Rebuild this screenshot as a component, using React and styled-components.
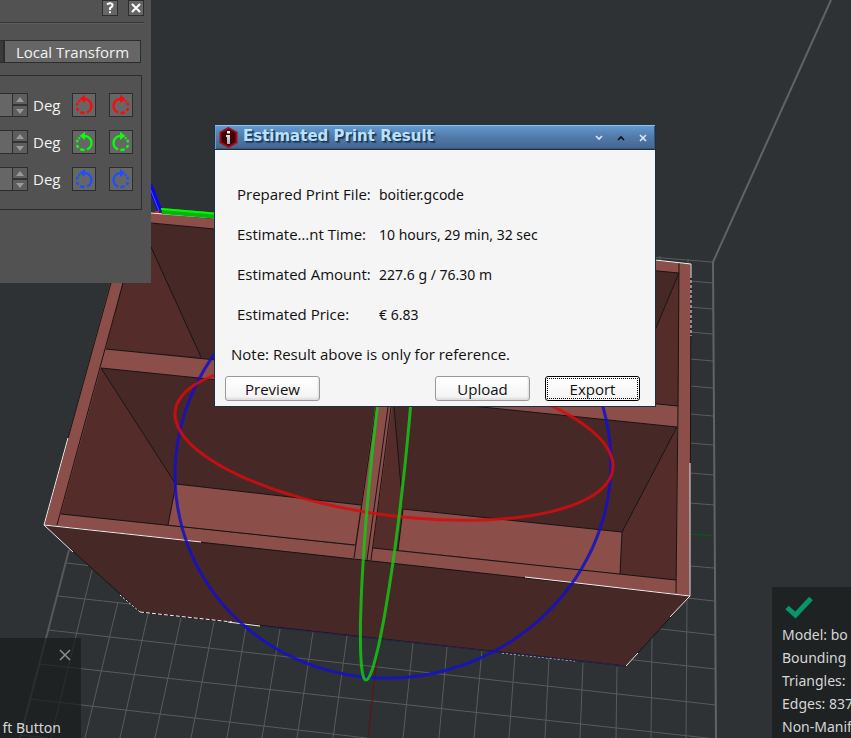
import React from "react";
import styled, { createGlobalStyle, css } from "styled-components";

const GlobalStyle = createGlobalStyle`
  * { box-sizing: border-box; }
  body { margin: 0; background: #2e3235; }
  body, button, input { font-family: "Noto Sans", "Open Sans", sans-serif; font-size: 14px; }
`;

const Viewport = styled.main`
  position: relative;
  height: 100vh;
  overflow: hidden;
  background: #2e3235;
`;

const SceneSvg = styled.svg`
  display: block;
  width: 100%;
  height: 100%;
`;

/* ---------- 3D scene ---------- */

/* Projected circle: centre c, with u and v as its two projected radii. */
const ring = ([cx, cy], [ux, uy], [vx, vy]) => {
  const steps = 120;
  const pts = Array.from({ length: steps }, (_, i) => {
    const t = (i / steps) * Math.PI * 2;
    const x = cx + ux * Math.cos(t) + vx * Math.sin(t);
    const y = cy + uy * Math.cos(t) + vy * Math.sin(t);
    return `${x.toFixed(1)} ${y.toFixed(1)}`;
  });
  return `M${pts.join("L")}Z`;
};

const gridColumns = [
  [92, 570, 51, 738], [118, 602, 85, 738], [148, 614, 120, 738], [181, 618, 155, 738],
  [214, 622, 191, 738], [246, 627, 227, 738], [280, 629, 262, 738], [313, 632, 297, 738],
  [347, 636, 333, 738], [413, 643, 403, 738], [447, 647, 439, 738], [482, 650, 474, 738],
  [515, 654, 509, 738], [549, 658, 545, 738], [583, 663, 580, 738], [617, 667, 616, 738],
  [652, 638, 651, 738], [687, 598, 686, 738],
];

const gridRows = [
  [66, 563, 715, 635], [58, 596, 715, 669], [48, 630, 716, 705], [39, 664, 716, 739],
  [30, 699, 367, 738], [20, 735, 48, 738], [687, 598, 714, 601], [690, 566, 714, 568],
  [690, 503, 714, 505], [690, 473, 714, 475], [690, 443, 713, 445], [690, 414, 713, 416],
  [690, 386, 713, 388], [690, 359, 713, 361], [690, 332, 713, 334], [690, 307, 713, 309],
  [690, 281, 713, 283], [650, 257, 712, 262], [660, 256, 660, 260], [688, 259, 688, 263],
];

const modelEdges = [
  "M111 283 44 525 M123 283 57 525 M61 514 355 545 M373 548 676 580",
  "M44 525 690 596 626 666 140 612Z",
  "M151 247 201 357 M151 223 679 273 M106 349 678 406 M101 368 677 427",
  "M101 368 175 483 M176 484 361 505 M176 484 168 525",
  "M376 407 354 558 M388 407 367 560 M391 407 371 560 M394 407 401 487",
  "M403 509 622 532 620 574 M403 509 398 550 M677 427 622 532",
  "M679 263 678 406 676 593 M679 273 640 366 M691 264 690 596",
].join(" ");

function Scene() {
  return (
    <SceneSvg viewBox="0 0 851 738" preserveAspectRatio="xMidYMid slice" aria-hidden="true">
      <g stroke="#595b5c" strokeWidth="1">
        {[...gridColumns, ...gridRows].map(([x1, y1, x2, y2]) => (
          <line key={`${x1}-${y1}-${x2}`} x1={x1} y1={y1} x2={x2} y2={y2} />
        ))}
      </g>
      <g stroke="#616263" fill="none">
        <path d="M831 0 713 262 716 738" strokeWidth="2" />
        <path d="M69 550 20 738" strokeWidth="2" strokeOpacity="0.8" />
      </g>
      <path d="M690 534 714 536" stroke="#0b5c0b" />
      <path d="M379 640 368 738" stroke="#6b0d0f" />

      <path d="M130 211 691 264 690 596 44 525Z" fill="#8b4e49" />
      <path d="M138 222 679 273 678 406 106 349Z" fill="#462827" />
      <path d="M138 222 106 349 201 357 140 222Z" fill="#542d2a" />
      <path d="M679 273 640 366 640 402 678 406Z" fill="#542d2a" />
      <path d="M101 368 677 427 676 580 61 514Z" fill="#462827" />
      <path d="M101 368 176 484 168 525 61 514Z" fill="#542d2a" />
      <path d="M677 427 622 532 620 574 676 580Z" fill="#542d2a" />
      <path d="M176 484 361 505 355 545 168 525Z" fill="#8b4e49" />
      <path d="M403 509 622 532 620 574 398 550Z" fill="#8b4e49" />
      <path d="M376 400 394 400 372 560 354 558Z" fill="#8b4e49" />
      <path d="M392 407 394 407 401 487 403 509 398 550 373 548Z" fill="#542d2a" />
      <path d="M44 525 690 596 626 666 140 612Z" fill="#462827" />
      <path d={modelEdges} stroke="#171515" fill="none" />

      <g stroke="#f4f0ef" fill="none">
        <path d="M68 438 44 525 201 542 M44 525 73 552 M525 577 690 596 670 617 M638 653 626 666" />
        <path d="M690 463V596 M151 213 215 218 M655 260 691 264V275" />
        <path d="M691 275V336" strokeDasharray="3 2" />
        <path d="M120 595 140 612" strokeDasharray="2 2" />
        <path d="M140 612 232 622" strokeDasharray="4 2" />
        <path d="M228 622 260 626" />
        <path d="M502 653 575 661" strokeDasharray="2 2" />
      </g>
      <path d="M260 626 626 666" stroke="#25244f" />

      <path d="M150 185 160 211" stroke="#0606f4" strokeWidth="5" />
      <path d="M150 188 159 211" stroke="#5756c8" strokeWidth="1" />
      <path d="M162 211 220 216" stroke="#05b50c" strokeWidth="6" />
      <path d="M161 209 220 214" stroke="#05f505" strokeWidth="2" />
      <path d="M155 212H159" stroke="#e32020" strokeWidth="2" />

      <g fill="none" strokeWidth="3">
        <path d={ring([393, 469], [218, -6], [0, 209])} stroke="#1410c8" strokeOpacity="0.86" />
        <path d={ring([394, 440], [219, 26], [0, 76])} stroke="#d80c10" strokeOpacity="0.84" />
        <path d={ring([389, 455], [17, 0], [-23, 225])} stroke="#14c814" strokeOpacity="0.84" />
      </g>
    </SceneSvg>
  );
}

/* ---------- rotate panel ---------- */

const ToolPanel = styled.section`
  position: absolute;
  top: 0;
  left: 0;
  width: 151px;
  height: 283px;
  padding-right: 9px;
  overflow: hidden;
  display: flex;
  flex-direction: column;
  align-items: flex-end;
  background: #525252;
  color: #f2f2f2;
`;

const PanelHeader = styled.header`
  flex: none;
  width: 240px;
  height: 24px;
  margin-right: -2px;
  display: flex;
  justify-content: flex-end;
  align-items: flex-start;
  gap: 10px;
  border-bottom: 1px solid #5f5f5f;
  box-shadow: inset 0 -1px #363636;
`;

const DarkButton = styled.button`
  flex: none;
  display: grid;
  place-items: center;
  width: ${(p) => p.$size}px;
  height: ${(p) => p.$size}px;
  padding: 0;
  border: 1px solid #2d2d2d;
  background: #666;
  color: #fff;
`;

const Tabs = styled.div`
  flex: none;
  display: flex;
  margin: 16px 1px 12px 0;
`;

const Tab = styled.button`
  width: 137px;
  height: 23px;
  padding: 0;
  border: 1px solid #2d2d2d;
  background: ${(p) => (p.$active ? "#3a3a3a" : "#666")};
  color: #f2f2f2;
  font-family: "Open Sans", sans-serif;
  font-size: 15px;
  line-height: 20px;
  white-space: nowrap;
`;

const AxisGroup = styled.div`
  flex: none;
  display: flex;
  flex-direction: column;
  align-items: flex-end;
  gap: 13px;
  width: 240px;
  padding: 17px 8px 18px;
  border: 1px solid #2d2d2d;
`;

const AxisRow = styled.div`
  display: flex;
  align-items: center;
  height: 24px;
`;

const Spin = styled.div`
  display: flex;
  height: 24px;
  border: 1px solid #2d2d2d;
`;

const AngleInput = styled.input`
  width: 80px;
  padding: 0 4px;
  border: 0;
  background: #666;
  color: #f2f2f2;
`;

const Steppers = styled.div`
  display: grid;
  width: 15px;
  gap: 2px;
  background: #333;
  border-left: 1px solid #2d2d2d;
`;

const Step = styled.button`
  display: grid;
  place-items: center;
  padding: 0;
  border: 0;
  background: #5e5e5e;
`;

const Unit = styled.span`
  width: 44px;
  padding-left: 5px;
  font-family: "Open Sans", sans-serif;
  font-size: 15px;
`;

const RotatePair = styled.div`
  display: flex;
  gap: 13px;
`;

function RotateIcon({ color, mirrored }) {
  return (
    <svg width="22" height="22" viewBox="1 1 22 22" fill="none" stroke={color} strokeWidth="2.4">
      <g transform={mirrored ? "matrix(-1 0 0 1 24 0)" : undefined}>
        <path d="M12 6A7 7 0 0 1 15 19.5" />
        <path d="M12.5 20A7 7 0 0 1 8.3 19.1 M6.4 17.7A7 7 0 0 1 5 15 M5 12.4A7 7 0 0 1 5.8 9.8 M6.6 8.7 7.8 7.6" />
        <path d="M7.5 6 13 1.8V10Z" fill={color} stroke="none" />
      </g>
    </svg>
  );
}

const axes = [
  { name: "X", color: "#ff0808" },
  { name: "Y", color: "#08ff08" },
  { name: "Z", color: "#1c50ff" },
];

function RotatePanel() {
  return (
    <ToolPanel aria-label="Rotate">
      <PanelHeader>
        <DarkButton $size={16} aria-label="Help">
          <svg width="8" height="12" viewBox="0 0 8 12" fill="none" stroke="#fff" strokeWidth="2">
            <path d="M1 2.5Q3 1 5 1.4 7.4 2.2 6 4.6L4 6.3V8 M4 9.3V11.3" />
          </svg>
        </DarkButton>
        <DarkButton $size={16} aria-label="Close">
          <svg width="10" height="10" viewBox="0 0 10 10" stroke="#fff" strokeWidth="2">
            <path d="M1 1 9 9M9 1 1 9" />
          </svg>
        </DarkButton>
      </PanelHeader>
      <Tabs>
        <Tab $active aria-label="World transform" />
        <Tab>Local Transform</Tab>
      </Tabs>
      <AxisGroup>
        {axes.map(({ name, color }) => (
          <AxisRow key={name}>
            <Spin>
              <AngleInput aria-label={`${name} angle`} />
              <Steppers>
                <Step aria-label={`Increase ${name}`}>
                  <svg width="8" height="5"><path d="M0 5 4 0 8 5Z" fill="#9a9a9a" /></svg>
                </Step>
                <Step aria-label={`Decrease ${name}`}>
                  <svg width="8" height="5"><path d="M0 0 4 5 8 0Z" fill="#9a9a9a" /></svg>
                </Step>
              </Steppers>
            </Spin>
            <Unit>Deg</Unit>
            <RotatePair>
              <DarkButton $size={24} aria-label={`Rotate ${name} counterclockwise`}>
                <RotateIcon color={color} />
              </DarkButton>
              <DarkButton $size={24} aria-label={`Rotate ${name} clockwise`}>
                <RotateIcon color={color} mirrored />
              </DarkButton>
            </RotatePair>
          </AxisRow>
        ))}
      </AxisGroup>
    </ToolPanel>
  );
}

/* ---------- result dialog ---------- */

const Dialog = styled.section`
  position: absolute;
  top: 125px;
  left: 214px;
  width: 442px;
  background: #f5f5f5;
  border: 1px solid #1c3043;
  border-top: 0;
  color: #111;
`;

const TitleBar = styled.header`
  display: flex;
  align-items: center;
  height: 25px;
  padding: 0 1px 0 4px;
  background: linear-gradient(#6199cf, #527cab 45%, #436590);
  border-top: 1px solid #86c5f5;
  border-bottom: 1px solid #1f2f44;
  box-shadow: inset 1px 0 #6d9fd0, inset -1px 0 #35577d, inset 0 -1px #36557a;
`;

const Title = styled.h1`
  flex: 1;
  margin: 0 0 0 5px;
  padding-bottom: 2px;
  color: #b9e2ff;
  font: bold 15px/21px "DejaVu Sans", sans-serif;
  text-shadow: 1px 1px 1px #1c344f, 2px 2px 1px #2a4567;
  white-space: nowrap;
`;

const WindowButton = styled.button`
  display: grid;
  place-items: center;
  width: 22px;
  height: 22px;
  padding: 0;
  border: 0;
  background: none;
`;

const Fields = styled.dl`
  display: grid;
  grid-template-columns: 142px 1fr;
  grid-auto-rows: 40px;
  align-items: center;
  margin: 24px 20px 0 22px;
  white-space: nowrap;
`;

const Label = styled.dt`
  font-family: "Open Sans", sans-serif;
  font-size: 15px;
`;

const Value = styled.dd`
  margin: 0;
`;

const Note = styled.p`
  margin: 10px 16px 12px;
  font-family: "Open Sans", sans-serif;
  font-size: 15px;
  line-height: 20px;
`;

const Actions = styled.footer`
  display: flex;
  gap: 15px;
  padding: 0 15px 5px 10px;
`;

const ActionButton = styled.button`
  width: 95px;
  height: 25px;
  padding: 0;
  border: 1px solid #999;
  border-radius: 3px;
  background: linear-gradient(#fff, #f3f3f3);
  box-shadow: inset -1px -2px 2px #dedede;
  color: #111;
  font-family: "Open Sans", sans-serif;
  font-size: 15px;
  line-height: 20px;
  ${(p) => p.$first && css`margin-right: auto;`}
  ${(p) => p.$focused && css`
    border-color: #000;
    box-shadow: none;
    outline: 1px dotted #000;
    outline-offset: -3px;
  `}
`;

const fields = [
  ["Prepared Print File:", "boitier.gcode"],
  ["Estimate…nt Time:", "10 hours, 29 min, 32 sec"],
  ["Estimated Amount:", "227.6 g / 76.30 m"],
  ["Estimated Price:", "€ 6.83"],
];

function ResultDialog() {
  return (
    <Dialog role="dialog" aria-labelledby="result-title">
      <TitleBar>
        <svg width="19" height="21" viewBox="0 0 19 21">
          <defs>
            <linearGradient id="badge-letter" x1="0" y1="0" x2="0" y2="1">
              <stop offset="0" stopColor="#fff" />
              <stop offset="1" stopColor="#a8a8a8" />
            </linearGradient>
          </defs>
          <path d="M9.5 1 17.5 5.5V15.5L9.5 20 1.5 15.5V5.5Z" fill="#3d0507" stroke="#a30e16" strokeWidth="2" />
          <path d="M8 4H11V6.5H8Z M7 8H11V17H8V10H7Z" fill="url(#badge-letter)" />
        </svg>
        <Title id="result-title">Estimated Print Result</Title>
        <WindowButton aria-label="Minimize">
          <svg width="8" height="6" fill="none" stroke="#dce9f5" strokeWidth="1.6"><path d="M1 1 4 4 7 1" /></svg>
        </WindowButton>
        <WindowButton aria-label="Maximize">
          <svg width="8" height="6" fill="none" stroke="#080c12" strokeWidth="1.6"><path d="M1 5 4 2 7 5" /></svg>
        </WindowButton>
        <WindowButton aria-label="Close dialog">
          <svg width="8" height="8" stroke="#dce9f5" strokeWidth="1.6"><path d="M1 1 7 7M7 1 1 7" /></svg>
        </WindowButton>
      </TitleBar>
      <Fields>
        {fields.map(([label, value]) => (
          <React.Fragment key={label}>
            <Label>{label}</Label>
            <Value>{value}</Value>
          </React.Fragment>
        ))}
      </Fields>
      <Note>Note: Result above is only for reference.</Note>
      <Actions>
        <ActionButton $first>Preview</ActionButton>
        <ActionButton>Upload</ActionButton>
        <ActionButton $focused>Export</ActionButton>
      </Actions>
    </Dialog>
  );
}

/* ---------- corner overlays ---------- */

const Overlay = styled.aside`
  position: absolute;
  background: rgba(24, 26, 27, 0.68);
  color: #d6d6d6;
  white-space: nowrap;
  overflow: hidden;
`;

const HintOverlay = styled(Overlay)`
  left: 0;
  bottom: 0;
  width: 81px;
  height: 100px;
  padding: 11px 10px 0 0;
  display: flex;
  flex-direction: column;
  align-items: flex-end;
  justify-content: space-between;
`;

const HintClose = styled.button`
  padding: 0;
  border: 0;
  background: none;
  line-height: 0;
`;

const HintText = styled.div`
  padding-right: 10px;
  line-height: 20px;
`;

const InfoOverlay = styled(Overlay)`
  right: 0;
  bottom: 0;
  width: 79px;
  height: 151px;
  padding: 8px 0 0 10px;
`;

const CheckMark = styled.svg`
  display: block;
`;

const InfoLine = styled.div`
  line-height: 23px;
`;

const info = ["Model: bo", "Bounding", "Triangles:", "Edges: 837", "Non-Manif"];

export default function App() {
  return (
    <Viewport>
      <GlobalStyle />
      <Scene />
      <RotatePanel />
      <HintOverlay>
        <HintClose aria-label="Close hints">
          <svg width="12" height="12" stroke="#8d8f90" strokeWidth="1.5"><path d="M1 1 11 11M11 1 1 11" /></svg>
        </HintClose>
        <HintText>ft Button</HintText>
      </HintOverlay>
      <InfoOverlay>
        <CheckMark width="32" height="28" viewBox="0 0 32 28" fill="none">
          <path d="M5 12.5 13.5 20 29 3.5" stroke="#07966a" strokeWidth="5" />
        </CheckMark>
        {info.map((line) => <InfoLine key={line}>{line}</InfoLine>)}
      </InfoOverlay>
      <ResultDialog />
    </Viewport>
  );
}
